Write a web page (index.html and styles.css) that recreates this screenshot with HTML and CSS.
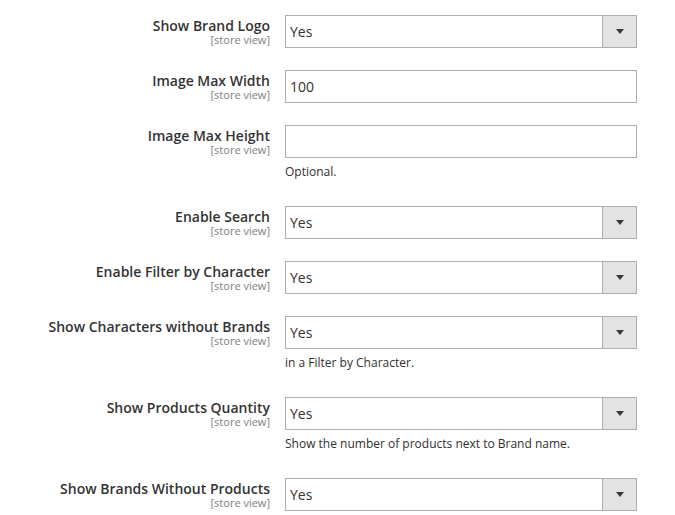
FILE: index.html
```html
<!DOCTYPE html>
<html>
<head>
<meta charset="utf-8">
<link rel="stylesheet" href="styles.css">
</head>
<body>
<div class="form">
  <div class="row">
    <div class="label"><span class="title">Show Brand Logo</span><span class="scope">[store view]</span></div>
    <div class="control"><div class="select"><span class="value">Yes</span><span class="btn"><i class="arrow"></i></span></div></div>
  </div>
  <div class="row">
    <div class="label"><span class="title">Image Max Width</span><span class="scope">[store view]</span></div>
    <div class="control"><div class="input"><span class="value">100</span></div></div>
  </div>
  <div class="row">
    <div class="label"><span class="title">Image Max Height</span><span class="scope">[store view]</span></div>
    <div class="control"><div class="input"><span class="value"></span></div><div class="note">Optional.</div></div>
  </div>
  <div class="row">
    <div class="label"><span class="title">Enable Search</span><span class="scope">[store view]</span></div>
    <div class="control"><div class="select"><span class="value">Yes</span><span class="btn"><i class="arrow"></i></span></div></div>
  </div>
  <div class="row">
    <div class="label"><span class="title">Enable Filter by Character</span><span class="scope">[store view]</span></div>
    <div class="control"><div class="select"><span class="value">Yes</span><span class="btn"><i class="arrow"></i></span></div></div>
  </div>
  <div class="row">
    <div class="label"><span class="title">Show Characters without Brands</span><span class="scope">[store view]</span></div>
    <div class="control"><div class="select"><span class="value">Yes</span><span class="btn"><i class="arrow"></i></span></div><div class="note">in a Filter by Character.</div></div>
  </div>
  <div class="row">
    <div class="label"><span class="title">Show Products Quantity</span><span class="scope">[store view]</span></div>
    <div class="control"><div class="select"><span class="value">Yes</span><span class="btn"><i class="arrow"></i></span></div><div class="note">Show the number of products next to Brand name.</div></div>
  </div>
  <div class="row">
    <div class="label"><span class="title">Show Brands Without Products</span><span class="scope">[store view]</span></div>
    <div class="control"><div class="select"><span class="value">Yes</span><span class="btn"><i class="arrow"></i></span></div></div>
  </div>
</div>
</body>
</html>
```
FILE: styles.css
```css
html, body {
  margin: 0;
  padding: 0;
  background: #ffffff;
}
body {
  font-family: "Open Sans", "Liberation Sans", sans-serif;
  color: #303030;
}
.form {
  padding-top: 15px;
  display: flex;
  flex-direction: column;
  gap: 22px;
}
.row {
  display: grid;
  grid-template-columns: 270px 352px;
  column-gap: 15px;
  align-items: start;
}
.label {
  display: flex;
  flex-direction: column;
  align-items: flex-end;
  text-align: right;
  padding-top: 3px;
}
.title {
  font-size: 14px;
  font-weight: 600;
  line-height: 16px;
  color: #333333;
  white-space: nowrap;
}
.scope {
  font-size: 11px;
  line-height: 12px;
  color: #808080;
}
.control {
  display: flex;
  flex-direction: column;
}
.select, .input {
  box-sizing: border-box;
  height: 33px;
  border: 1px solid #adadad;
  background: #fff;
  display: flex;
  align-items: stretch;
}
.value {
  flex: 1;
  font-size: 14px;
  line-height: 31px;
  padding-left: 4px;
  color: #303030;
}
.btn {
  width: 33px;
  border-left: 1px solid #adadad;
  background: #e3e3e3;
  display: flex;
  align-items: center;
  justify-content: center;
}
.arrow {
  width: 0;
  height: 0;
  border-top: 5px solid #41362f;
  border-left: 4px solid transparent;
  border-right: 4px solid transparent;
}
.note {
  font-size: 12px;
  line-height: 18px;
  margin-top: 5px;
  margin-bottom: 3px;
  color: #303030;
}
```
